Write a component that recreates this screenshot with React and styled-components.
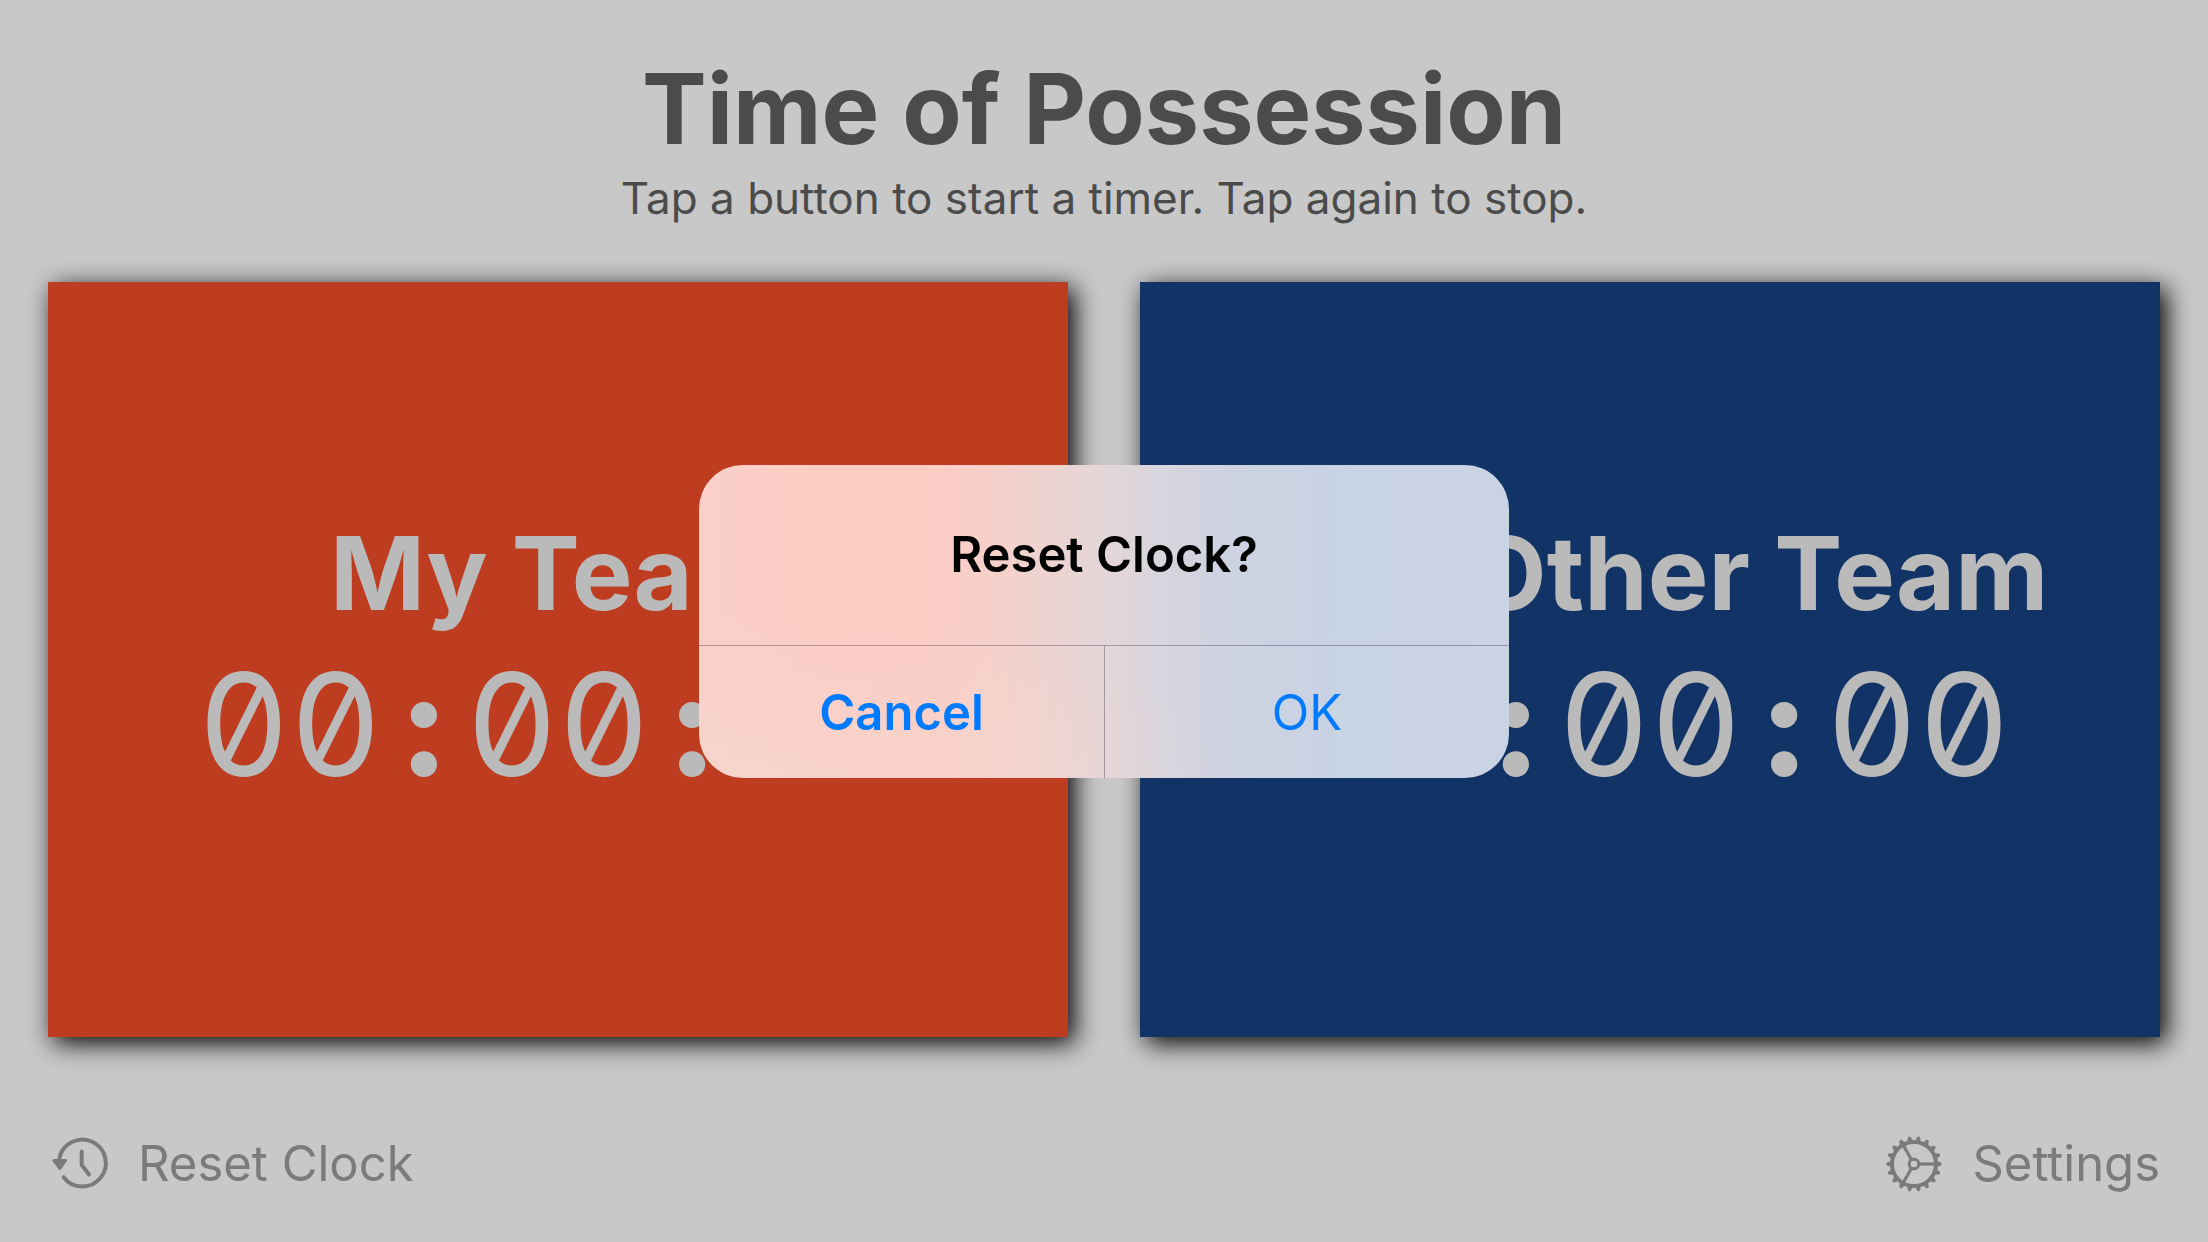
import React from "react";
import styled, { createGlobalStyle } from "styled-components";

const GlobalStyle = createGlobalStyle`
  *, *::before, *::after { box-sizing: border-box; }
  body { margin: 0; background: #c8c8c8; }
  button { border: 0; margin: 0; padding: 0; background: none; font: inherit; color: inherit; cursor: pointer; }
`;

const Page = styled.div`
  min-height: 100vh;
  display: flex;
  flex-direction: column;
  padding: 48px;
  font-family: Inter, "Liberation Sans", sans-serif;
  color: #4b4b4b;
`;

const Header = styled.header`
  text-align: center;
  margin-bottom: 56px;
`;

const Title = styled.h1`
  margin: 0;
  font-size: 97px;
  line-height: 122px;
  font-weight: 700;
`;

const Subtitle = styled.p`
  margin: 0;
  font-size: 44px;
  line-height: 56px;
`;

const Teams = styled.main`
  flex: 1;
  display: grid;
  grid-template-columns: 1fr 1fr;
  gap: 72px;
`;

const TeamButton = styled.button`
  && {
    display: flex;
    flex-direction: column;
    align-items: center;
    justify-content: center;
    background: ${(p) => p.$color};
    color: #bababa;
    box-shadow: 6px 6px 24px #000;
  }
`;

const TeamName = styled.span`
  font-size: 102px;
  line-height: 128px;
  font-weight: 700;
  white-space: nowrap;
`;

const TeamTime = styled.span`
  font-feature-settings: "zero", "tnum", "calt" 0;
  font-size: 142px;
  line-height: 174px;
  white-space: nowrap;
`;

const Colon = styled.span`
  display: inline-block;
  width: 84px;
  text-align: center;
  font-weight: 800;
`;

const Footer = styled.footer`
  display: flex;
  justify-content: space-between;
  margin-top: 97px;
`;

const ToolButton = styled.button`
  && {
    display: flex;
    align-items: center;
    gap: 26px;
    font-size: 49px;
    line-height: 60px;
    color: #7b7b7b;
  }
`;

const Icon = styled.svg`
  display: block;
  width: 64px;
  height: 60px;
`;

const Overlay = styled.div`
  position: fixed;
  inset: 0;
  display: flex;
  align-items: center;
  justify-content: center;
`;

const Alert = styled.div`
  width: 810px;
  overflow: hidden;
  border-radius: 44px;
  font-family: Inter, "Liberation Sans", sans-serif;
  background:
    radial-gradient(ellipse 55% 60% at 10% 105%, rgba(244, 216, 206, 0.6), rgba(244, 216, 206, 0)),
    linear-gradient(90deg, #fad0c9 0%, #fccdc5 14%, #fbcdc5 28%, #f7d0ca 36%, #efd3cf 42%, #e4d6d8 50%, #d8d5dd 57%, #cfd3e1 64%, #cad3e2 70%, #c8d3e3 80%, #cad3e4 100%);
`;

const AlertTitle = styled.h2`
  margin: 0;
  padding: 60px 48px;
  font-size: 49px;
  line-height: 60px;
  font-weight: 600;
  text-align: center;
  color: #000;
`;

const AlertActions = styled.div`
  display: grid;
  grid-template-columns: 1fr 1fr;
  border-top: 1px solid rgba(60, 40, 80, 0.36);
`;

const AlertButton = styled.button`
  && {
    height: 132px;
    padding-top: 2px;
    font-size: 49px;
    line-height: 60px;
    font-weight: ${(p) => (p.$strong ? 600 : 400)};
    color: #007aff;
  }
  & + & { border-left: 1px solid rgba(60, 40, 80, 0.36); }
`;

const ClockIcon = () => (
  <Icon viewBox="0 0 64 60" fill="none" stroke="currentColor" strokeWidth="4" strokeLinecap="round" strokeLinejoin="round" aria-hidden="true">
    <path d="M11.5 23.5A23.5 23.5 0 1 1 15.6 43.2" />
    <path d="M33.7 17.5V31L41 40.5" />
    <path d="M6 26.5H17.5L12 34.5Z" fill="currentColor" strokeWidth="3" />
  </Icon>
);

const TEETH = Array.from({ length: 18 }, (_, i) => i * 20);

const GearIcon = () => (
  <Icon viewBox="0 0 64 60" fill="none" stroke="currentColor" aria-hidden="true">
    <g transform="translate(32 30)">
      <circle r="22" strokeWidth="4" />
      {TEETH.map((a) => (
        <path key={a} d="M22.5 -3L27 -1.5Q28.6 0 27 1.5L22.5 3Z" fill="currentColor" stroke="none" transform={`rotate(${a})`} />
      ))}
      <circle r="4.8" strokeWidth="3" />
      {[0, 120, 240].map((a) => (
        <path key={a} d="M5.5 0H21" strokeWidth="3.2" transform={`rotate(${a})`} />
      ))}
    </g>
  </Icon>
);

const Clock = ({ hours, minutes, seconds }) => (
  <TeamTime>
    {hours}<Colon>:</Colon>{minutes}<Colon>:</Colon>{seconds}
  </TeamTime>
);

const teams = [
  { name: "My Team", color: "#be3c1f" },
  { name: "The Other Team", color: "#123366" },
];

export default function App() {
  return (
    <>
      <GlobalStyle />
      <Page>
        <Header>
          <Title>Time of Possession</Title>
          <Subtitle>Tap a button to start a timer. Tap again to stop.</Subtitle>
        </Header>
        <Teams>
          {teams.map((t) => (
            <TeamButton key={t.name} type="button" $color={t.color}>
              <TeamName>{t.name}</TeamName>
              <Clock hours="00" minutes="00" seconds="00" />
            </TeamButton>
          ))}
        </Teams>
        <Footer>
          <ToolButton type="button"><ClockIcon />Reset Clock</ToolButton>
          <ToolButton type="button"><GearIcon />Settings</ToolButton>
        </Footer>
      </Page>
      <Overlay>
        <Alert role="alertdialog" aria-modal="true" aria-labelledby="alert-title">
          <AlertTitle id="alert-title">Reset Clock?</AlertTitle>
          <AlertActions>
            <AlertButton type="button" $strong>Cancel</AlertButton>
            <AlertButton type="button">OK</AlertButton>
          </AlertActions>
        </Alert>
      </Overlay>
    </>
  );
}
